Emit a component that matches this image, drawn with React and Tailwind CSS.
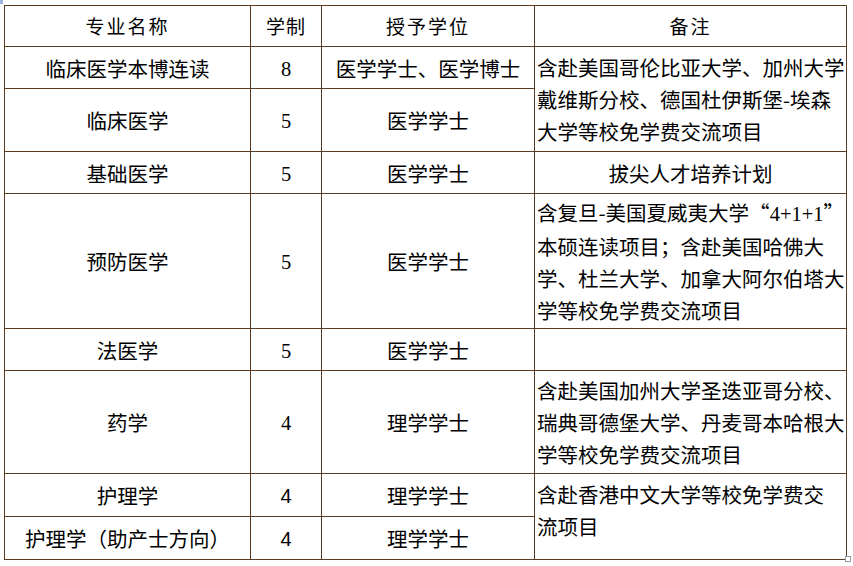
import React from "react";

const B = "border border-[#5a3b1f]";

function Num({ v, sans }) {
  if (sans) {
    return <span className="font-['Liberation_Sans'] text-[20px]">{v}</span>;
  }
  return <span className="font-['Liberation_Serif']">{v}</span>;
}

function Lines({ lines }) {
  return (
    <div className="whitespace-nowrap leading-[32px] pl-[2px]">
      {lines.map((l, i) => (
        <div key={i}>{l}</div>
      ))}
    </div>
  );
}

export default function App() {
  return (
    <div className="relative w-[853px] h-[566px] bg-white overflow-hidden text-black font-['Noto_Sans_CJK_SC',sans-serif]">
      <div className="absolute left-0 top-0 w-[3px] h-[4px] bg-[#9db7e0]" />
      <div className="pt-[5px] pl-[4px]">
        <table className="table-fixed border-collapse w-[842px] text-[20.5px] leading-[32px]">
          <colgroup>
            <col className="w-[246px]" />
            <col className="w-[71px]" />
            <col className="w-[213px]" />
            <col className="w-[312px]" />
          </colgroup>
          <tbody>
            <tr className="h-[41px] text-[19px] tracking-[2px]">
              <td className={`${B} text-center align-middle p-0`}>专业名称</td>
              <td className={`${B} text-center align-middle p-0 tracking-[1px]`}>学制</td>
              <td className={`${B} text-center align-middle p-0`}>授予学位</td>
              <td className={`${B} text-center align-middle p-0`}>备注</td>
            </tr>
            <tr className="h-[42px]">
              <td className={`${B} text-center align-middle p-0`}>临床医学本博连读</td>
              <td className={`${B} text-center align-middle p-0`}><Num v="8" /></td>
              <td className={`${B} text-center align-middle p-0`}>医学学士、医学博士</td>
              <td className={`${B} align-middle p-0`} rowSpan={2}>
                <Lines
                  lines={[
                    "含赴美国哥伦比亚大学、加州大学",
                    "戴维斯分校、德国杜伊斯堡-埃森",
                    "大学等校免学费交流项目",
                  ]}
                />
              </td>
            </tr>
            <tr className="h-[63px]">
              <td className={`${B} text-center align-middle p-0`}>临床医学</td>
              <td className={`${B} text-center align-middle p-0`}><Num v="5" /></td>
              <td className={`${B} text-center align-middle p-0`}>医学学士</td>
            </tr>
            <tr className="h-[42px]">
              <td className={`${B} text-center align-middle p-0`}>基础医学</td>
              <td className={`${B} text-center align-middle p-0`}><Num v="5" /></td>
              <td className={`${B} text-center align-middle p-0`}>医学学士</td>
              <td className={`${B} text-center align-middle p-0`}>拔尖人才培养计划</td>
            </tr>
            <tr className="h-[135px]">
              <td className={`${B} text-center align-middle p-0`}>预防医学</td>
              <td className={`${B} text-center align-middle p-0`}><Num v="5" /></td>
              <td className={`${B} text-center align-middle p-0`}>医学学士</td>
              <td className={`${B} align-middle p-0`}>
                <Lines
                  lines={[
                    <>
                      含复旦-美国夏威夷大学“<Num v="4+1+1" />”
                    </>,
                    "本硕连读项目；含赴美国哈佛大",
                    "学、杜兰大学、加拿大阿尔伯塔大",
                    "学等校免学费交流项目",
                  ]}
                />
              </td>
            </tr>
            <tr className="h-[42px]">
              <td className={`${B} text-center align-middle p-0`}>法医学</td>
              <td className={`${B} text-center align-middle p-0`}><Num v="5" /></td>
              <td className={`${B} text-center align-middle p-0`}>医学学士</td>
              <td className={`${B} p-0`}></td>
            </tr>
            <tr className="h-[103px]">
              <td className={`${B} text-center align-middle p-0`}>药学</td>
              <td className={`${B} text-center align-middle p-0`}><Num v="4" /></td>
              <td className={`${B} text-center align-middle p-0`}>理学学士</td>
              <td className={`${B} align-middle p-0`}>
                <Lines
                  lines={[
                    "含赴美国加州大学圣迭亚哥分校、",
                    "瑞典哥德堡大学、丹麦哥本哈根大",
                    "学等校免学费交流项目",
                  ]}
                />
              </td>
            </tr>
            <tr className="h-[43px]">
              <td className={`${B} text-center align-middle p-0`}>护理学</td>
              <td className={`${B} text-center align-middle p-0`}><Num v="4" sans /></td>
              <td className={`${B} text-center align-middle p-0`}>理学学士</td>
              <td className={`${B} align-top p-0 pt-[4px]`} rowSpan={2}>
                <Lines lines={["含赴香港中文大学等校免学费交", "流项目"]} />
              </td>
            </tr>
            <tr className="h-[43px]">
              <td className={`${B} text-center align-middle p-0`}>护理学（助产士方向）</td>
              <td className={`${B} text-center align-middle p-0`}><Num v="4" sans /></td>
              <td className={`${B} text-center align-middle p-0`}>理学学士</td>
            </tr>
          </tbody>
        </table>
      </div>
      <div className="absolute left-[845px] top-[556px] w-[6px] h-[6px] border border-[#9a9a9a] bg-white" />
    </div>
  );
}
